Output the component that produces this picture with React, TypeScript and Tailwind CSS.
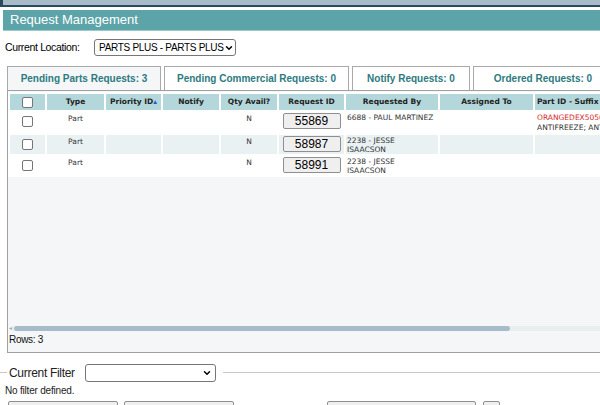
import { ChevronDown } from "lucide-react";

const rows = [
	{ id: "55869", by: ["6688 - PAUL MARTINEZ"], part: true },
	{ id: "58987", by: ["2238 - JESSE", "ISAACSON"], part: false },
	{ id: "58991", by: ["2238 - JESSE", "ISAACSON"], part: false },
];

const tabs = [
	{ label: "Pending Parts Requests: 3", w: "w-[154px]", active: true },
	{ label: "Pending Commercial Requests: 0", w: "w-[185px]", active: false },
	{ label: "Notify Requests: 0", w: "w-[118px]", active: false },
	{ label: "Ordered Requests: 0", w: "w-[140px]", active: false },
];

function Select({ label, className }: { label: string; className: string }) {
	return (
		<div
			className={
				"flex shrink-0 items-center justify-between border border-[#767676] rounded-[3px] bg-white pl-[4px] pr-[3px] " +
				className
			}
		>
			<span className="text-[10px] tracking-[-0.3px] text-black whitespace-nowrap">{label}</span>
			<ChevronDown size={10} strokeWidth={3.5} className="text-black shrink-0" />
		</div>
	);
}

function Checkbox() {
	return <div className="w-[11px] h-[11px] border border-[#767676] rounded-[2px] bg-white mx-auto" />;
}

export default function App() {
	return (
		<div className="w-[600px] h-[405px] overflow-hidden bg-white font-['Liberation_Sans',Arial,sans-serif] text-black">
			<div className="relative h-[5px] bg-[#a7bcc8] border-b-2 border-[#2b4a5f] box-content">
				<div className="absolute left-0 top-0 w-[3px] h-[5px] bg-[#2b4a5f]" />
			</div>
			<div className="h-[3px]" />
			<div className="ml-[3px] h-[21px] bg-[#5ca4a7] border-b border-[#9ccacc] flex items-center pl-[7px]">
				<span className="text-white text-[13px]">Request Management</span>
			</div>

			<div className="flex items-center mt-[8px] h-[17px]">
				<span className="ml-[5px] w-[89px] text-[10.5px] tracking-[-0.35px]">Current Location:</span>
				<Select label="PARTS PLUS - PARTS PLUS" className="w-[142px] h-[17px]" />
			</div>

			<div className="flex gap-[3px] ml-[7px] mt-[10px] h-[24px] items-end">
				{tabs.map((t) => (
					<div
						key={t.label}
						className={
							"shrink-0 h-[24px] flex items-center justify-center border border-[#a9a9a9] border-b-0 text-[10px] font-bold text-[#2d7a80] " +
							t.w +
							(t.active ? " bg-[#f4f6f7]" : " bg-white")
						}
					>
						{t.label}
					</div>
				))}
			</div>

			<div className="ml-[7px] w-[600px] h-[263px] border border-[#a0a0a0] bg-[#f4f6f7] flex flex-col">
				<div className="flex-1 overflow-hidden pt-[1px]">
					<table className="w-[649px] border-separate border-spacing-[2px] bg-white table-fixed font-['DejaVu_Sans',Verdana,sans-serif] text-[7.5px] text-[#333]">
						<colgroup>
							<col className="w-[35px]" />
							<col className="w-[57px]" />
							<col className="w-[55px]" />
							<col className="w-[56px]" />
							<col className="w-[56px]" />
							<col className="w-[65px]" />
							<col className="w-[92px]" />
							<col className="w-[93px]" />
							<col className="w-[120px]" />
						</colgroup>
						<thead>
							<tr className="h-[16px] bg-[#b3d7da] font-bold text-[#222]">
								<th className="p-0">
									<Checkbox />
								</th>
								<th className="p-0">Type</th>
								<th className="p-0 whitespace-nowrap">
									Priority ID<span className="text-[#1d5bc8]">▴</span>
								</th>
								<th className="p-0">Notify</th>
								<th className="p-0 whitespace-nowrap">Qty Avail?</th>
								<th className="p-0 whitespace-nowrap">Request ID</th>
								<th className="p-0 whitespace-nowrap">Requested By</th>
								<th className="p-0 whitespace-nowrap">Assigned To</th>
								<th className="p-0 text-left pl-[2px] whitespace-nowrap">Part ID - Suffix ▾</th>
							</tr>
						</thead>
						<tbody>
							{rows.map((r, i) => (
								<tr key={r.id} className={"h-[19px] " + (i === 1 ? "bg-[#eaf1f3]" : "bg-white")}>
									<td className="p-0 align-top">
										<div className="mt-[4px]">
											<Checkbox />
										</div>
									</td>
									<td className="p-0 text-center align-top pt-[1px]">Part</td>
									<td className="p-0" />
									<td className="p-0" />
									<td className="p-0 text-center align-top pt-[1px]">N</td>
									<td className="p-0 align-top pt-[1px]">
										<div className="mx-auto w-[58px] h-[16px] border border-[#8f8f8f] rounded-[2px] bg-[#efefef] flex items-center justify-center font-['Liberation_Sans',Arial,sans-serif] text-[12px] text-black">
											{r.id}
										</div>
									</td>
									<td className="p-0 align-top pt-[1px] pl-[1px] leading-[9px]">
										{r.by.map((l) => (
											<div key={l} className="whitespace-nowrap">
												{l}
											</div>
										))}
									</td>
									<td className="p-0" />
									<td className="p-0 align-top pt-[1px] pl-[2px] leading-[10px] whitespace-nowrap">
										{r.part && (
											<>
												<div className="text-[#d42a2a]">ORANGEDEX5050</div>
												<div>ANTIFREEZE; ANTIFREEZE</div>
											</>
										)}
									</td>
								</tr>
							))}
						</tbody>
					</table>
				</div>
				<div className="flex items-center h-[6px] mb-[3px] pl-[1px]">
					<span className="text-[6px] text-[#9aa] leading-none">◂</span>
					<div className="flex-1 h-[5px] bg-[#e8eef0] flex">
						<div className="ml-[2px] w-[496px] h-[5px] rounded-full bg-[#a6bcc8]" />
					</div>
				</div>
				<div className="h-[18px] pl-[1px] text-[10px] tracking-[-0.3px] leading-[12px] text-[#111]">Rows: 3</div>
			</div>

			<div className="flex items-center mt-[10px] h-[19px]">
				<div className="w-[7px] h-px bg-[#c8c8c8] shrink-0" />
				<span className="ml-[2px] w-[76px] shrink-0 whitespace-nowrap text-[12px] tracking-[-0.3px] text-[#222]">
					Current Filter
				</span>
				<Select label="" className="w-[131px] h-[18px]" />
				<div className="ml-[7px] flex-1 h-px bg-[#c8c8c8]" />
			</div>
			<div className="ml-[5px] mt-[1px] text-[10px] tracking-[-0.2px] text-[#222]">No filter defined.</div>
			<div className="flex mt-[3px] h-[20px]">
				<div className="ml-[8px] w-[110px] h-[20px] border border-[#8f8f8f] rounded-[2px] bg-[#efefef]" />
				<div className="ml-[6px] w-[110px] h-[20px] border border-[#8f8f8f] rounded-[2px] bg-[#efefef]" />
				<div className="ml-[93px] w-[149px] h-[20px] border border-[#8f8f8f] rounded-[2px] bg-[#efefef]" />
				<div className="ml-[7px] w-[17px] h-[20px] border border-[#8f8f8f] rounded-[2px] bg-[#efefef]" />
			</div>
		</div>
	);
}
